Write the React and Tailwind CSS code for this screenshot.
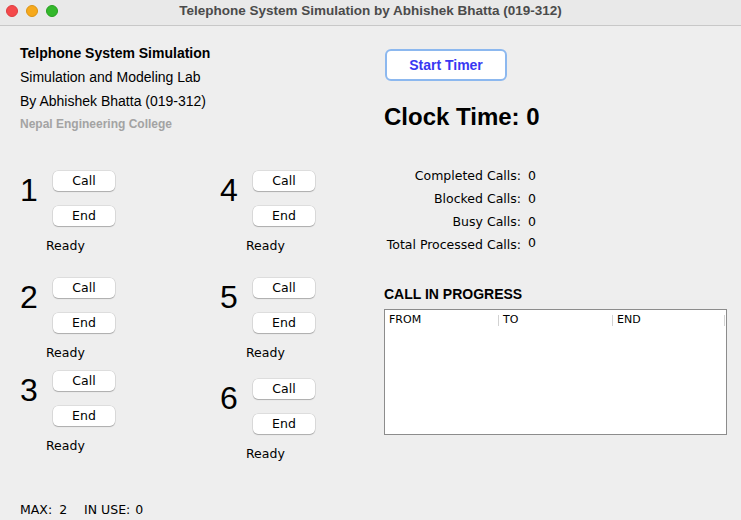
import React from "react"

const ui = { fontFamily: '"DejaVu Sans", sans-serif' }
const helv = { fontFamily: '"Liberation Sans", Arial, sans-serif' }

function SmallButton({ label }) {
    return (
        <div
            className="w-[62px] h-[20px] bg-white rounded-[5px] flex items-center justify-center text-[12.5px] text-black shadow-[0_0_0_0.5px_rgba(0,0,0,0.14),0_1px_1px_rgba(0,0,0,0.22)]"
            style={ui}
        >
            {label}
        </div>
    )
}

function Phone({ num, className = "" }) {
    return (
        <div className={className}>
            <div className="flex">
                <div className="w-[33px] h-[32px] mt-[3px] text-[32px] leading-[32px] text-black" style={helv}>
                    {num}
                </div>
                <div className="flex flex-col gap-[15px]">
                    <SmallButton label="Call" />
                    <SmallButton label="End" />
                </div>
            </div>
            <div className="ml-[26px] mt-[12px] text-[12.5px] leading-[16px] text-black" style={ui}>
                Ready
            </div>
        </div>
    )
}

function Stat({ label, value, raise }) {
    return (
        <div className="flex h-[23px] items-center text-[12.5px] text-black" style={ui}>
            <span className="w-[137px] text-right">{label}</span>
            <span className={"ml-[7px] " + (raise ? "-translate-y-[2px]" : "")}>{value}</span>
        </div>
    )
}

function HeaderCell({ label, width }) {
    return (
        <div className="flex items-center h-[16px]" style={{ width }}>
            <span className="flex-1 pl-[4px] text-[11px] leading-[16px] text-black" style={ui}>
                {label}
            </span>
            <div className="w-px h-[11px] bg-[#d2d2d2]" />
        </div>
    )
}

export default function App() {
    return (
        <div className="w-[741px] h-[520px] overflow-hidden bg-[#eeeeee] flex flex-col">
            {/* title bar */}
            <div className="h-[26px] shrink-0 bg-[#e9e9e9] border-b border-[#c8c8c8] relative flex items-center justify-center">
                <div className="absolute left-[6px] top-[5px] flex gap-[8px]">
                    <div className="w-[12px] h-[12px] rounded-full bg-[#f4494b] border border-[#de3d3f]" />
                    <div className="w-[12px] h-[12px] rounded-full bg-[#f6a91c] border border-[#dc9413]" />
                    <div className="w-[12px] h-[12px] rounded-full bg-[#34b82c] border border-[#27a020]" />
                </div>
                <span className="text-[13.5px] font-bold text-[#4b4b4b] -mt-[2px]" style={helv}>
                    Telephone System Simulation by Abhishek Bhatta (019-312)
                </span>
            </div>

            <div className="flex flex-1">
                {/* left side */}
                <div className="w-[364px] pl-[20px] pt-[15px] flex flex-col">
                    <div style={helv} className="text-black">
                        <div className="text-[14px] leading-[24px] font-bold">Telphone System Simulation</div>
                        <div className="text-[14px] leading-[24px]">Simulation and Modeling Lab</div>
                        <div className="text-[14px] leading-[24px]">By Abhishek Bhatta (019-312)</div>
                        <div className="text-[12px] leading-[22px] font-bold text-[#a3a3a3]">Nepal Engineering College</div>
                    </div>

                    <div className="flex mt-[36px]">
                        <div className="w-[200px] flex flex-col">
                            <Phone num="1" />
                            <Phone num="2" className="mt-[24px]" />
                            <Phone num="3" className="mt-[10px]" />
                        </div>
                        <div className="flex flex-col">
                            <Phone num="4" />
                            <Phone num="5" className="mt-[24px]" />
                            <Phone num="6" className="mt-[18px]" />
                        </div>
                    </div>

                    <div className="mt-[40px] flex text-[12.5px] leading-[16px] text-black" style={ui}>
                        <span>MAX:</span>
                        <span className="ml-[7px]">2</span>
                        <span className="ml-[17px]">IN USE:</span>
                        <span className="ml-[5px]">0</span>
                    </div>
                </div>

                {/* right side */}
                <div className="flex flex-col pt-[23px] pl-[20px]">
                    <div
                        className="ml-[1px] w-[122px] h-[32px] bg-white border-2 border-[#8cb8ef] rounded-[6px] flex items-center justify-center text-[14px] font-bold text-[#3838f2]"
                        style={helv}
                    >
                        Start Timer
                    </div>

                    <div className="mt-[21px] text-[24px] leading-[30px] font-bold text-black" style={helv}>
                        Clock Time: 0
                    </div>

                    <div className="mt-[33px]">
                        <Stat label="Completed Calls:" value="0" />
                        <Stat label="Blocked Calls:" value="0" />
                        <Stat label="Busy Calls:" value="0" />
                        <Stat label="Total Processed Calls:" value="0" raise />
                    </div>

                    <div className="mt-[27px] text-[14px] leading-[20px] font-bold text-black" style={helv}>
                        CALL IN PROGRESS
                    </div>

                    <div className="mt-[5px] w-[343px] h-[126px] bg-white border border-[#8c8c8c]">
                        <div className="flex mt-[2px]">
                            <HeaderCell label="FROM" width={114} />
                            <HeaderCell label="TO" width={114} />
                            <HeaderCell label="END" width={112} />
                        </div>
                    </div>
                </div>
            </div>
        </div>
    )
}
